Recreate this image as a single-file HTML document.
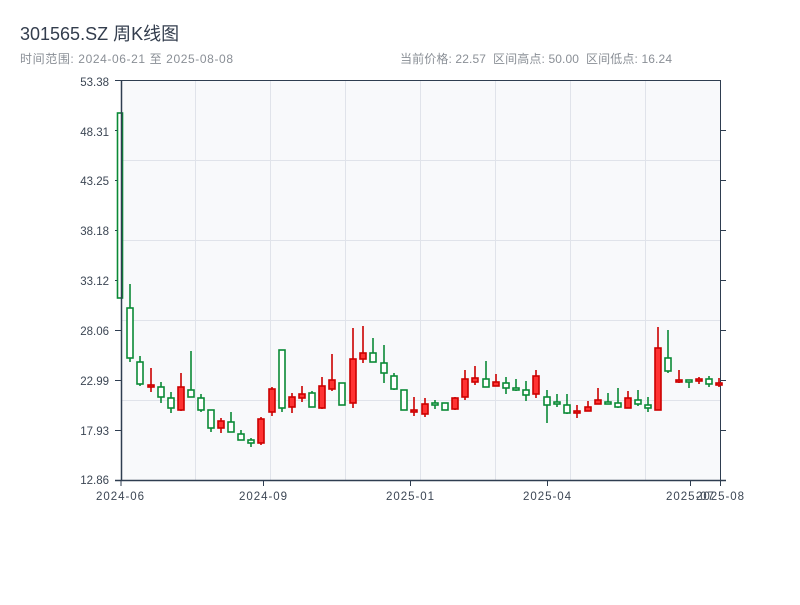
<!DOCTYPE html>
<html><head><meta charset="utf-8"><style>
body{margin:0;background:#fff;width:800px;height:600px;overflow:hidden;font-family:"Liberation Sans","Noto Sans CJK SC",sans-serif}
</style></head><body>
<svg width="800" height="600" xmlns="http://www.w3.org/2000/svg" font-family="Liberation Sans, Noto Sans CJK SC, sans-serif">
<text x="20" y="40" font-size="18" fill="#333d4d">301565.SZ 周K线图</text>
<text x="20" y="63" font-size="12" fill="#8a8f96" textLength="213" lengthAdjust="spacing">时间范围: 2024-06-21 至 2025-08-08</text>
<text x="400" y="63" font-size="12" fill="#8a8f96" textLength="272" lengthAdjust="spacing">当前价格: 22.57 &#160;区间高点: 50.00 &#160;区间低点: 16.24</text>
<rect x="121" y="80" width="599" height="400" fill="#f8f9fb"/>
<g stroke="#e0e3ea" stroke-width="1">
<line x1="195.5" y1="80" x2="195.5" y2="480"/><line x1="270.5" y1="80" x2="270.5" y2="480"/><line x1="345.5" y1="80" x2="345.5" y2="480"/><line x1="420.5" y1="80" x2="420.5" y2="480"/><line x1="495.5" y1="80" x2="495.5" y2="480"/><line x1="570.5" y1="80" x2="570.5" y2="480"/><line x1="645.5" y1="80" x2="645.5" y2="480"/>
<line x1="121" y1="160.5" x2="720" y2="160.5"/><line x1="121" y1="240.5" x2="720" y2="240.5"/><line x1="121" y1="320.5" x2="720" y2="320.5"/><line x1="121" y1="400.5" x2="720" y2="400.5"/>
</g>
<g stroke="#2e3d50" stroke-width="1">
<line x1="115" y1="80.5" x2="720" y2="80.5"/>
<line x1="115" y1="130.5" x2="121" y2="130.5"/><line x1="115" y1="180.5" x2="121" y2="180.5"/><line x1="115" y1="230.5" x2="121" y2="230.5"/><line x1="115" y1="280.5" x2="121" y2="280.5"/><line x1="115" y1="330.5" x2="121" y2="330.5"/><line x1="115" y1="380.5" x2="121" y2="380.5"/><line x1="115" y1="430.5" x2="121" y2="430.5"/>
<line x1="720.5" y1="80" x2="720.5" y2="481"/>
<line x1="720" y1="130.5" x2="726" y2="130.5"/><line x1="720" y1="180.5" x2="726" y2="180.5"/><line x1="720" y1="230.5" x2="726" y2="230.5"/><line x1="720" y1="280.5" x2="726" y2="280.5"/><line x1="720" y1="330.5" x2="726" y2="330.5"/><line x1="720" y1="380.5" x2="726" y2="380.5"/><line x1="720" y1="430.5" x2="726" y2="430.5"/>
<line x1="263.5" y1="480" x2="263.5" y2="486"/><line x1="410.5" y1="480" x2="410.5" y2="486"/><line x1="547.5" y1="480" x2="547.5" y2="486"/><line x1="690.5" y1="480" x2="690.5" y2="486"/><line x1="720.5" y1="480" x2="720.5" y2="486"/><line x1="121" y1="480" x2="121" y2="486"/>
</g>
<g font-size="11.5" fill="#3c4654" text-anchor="end">
<text x="109" y="86">53.38</text><text x="109" y="136">48.31</text><text x="109" y="185">43.25</text><text x="109" y="235">38.18</text><text x="109" y="285">33.12</text><text x="109" y="335">28.06</text><text x="109" y="385">22.99</text><text x="109" y="435">17.93</text><text x="109" y="484">12.86</text>
</g>
<g font-size="11.5" fill="#3c4654" text-anchor="middle">
<text x="120" y="500" textLength="48">2024-06</text><text x="263" y="500" textLength="48">2024-09</text><text x="410" y="500" textLength="48">2025-01</text><text x="547" y="500" textLength="48">2025-04</text><text x="690" y="500" textLength="48">2025-07</text><text x="720" y="500" textLength="48">2025-08</text>
</g>
<g stroke-width="1.6">
<g stroke="#0a8a36" fill="#fff">
<line x1="130" y1="284" x2="130" y2="362"/><rect x="127" y="308" width="6" height="50"/>
<line x1="140" y1="356" x2="140" y2="386"/><rect x="137" y="362" width="6" height="22"/>
<line x1="161" y1="382" x2="161" y2="403"/><rect x="158" y="387" width="6" height="10"/>
<line x1="171" y1="392" x2="171" y2="413"/><rect x="168" y="398" width="6" height="10"/>
<line x1="191" y1="351" x2="191" y2="397"/><rect x="188" y="390" width="6" height="7"/>
<line x1="201" y1="394" x2="201" y2="412"/><rect x="198" y="398" width="6" height="12"/>
<line x1="211" y1="410" x2="211" y2="432"/><rect x="208" y="410" width="6" height="18"/>
<line x1="231" y1="412" x2="231" y2="432"/><rect x="228" y="422" width="6" height="10"/>
<line x1="241" y1="430" x2="241" y2="440"/><rect x="238" y="434" width="6" height="6"/>
<line x1="251" y1="438" x2="251" y2="447"/><rect x="248" y="440" width="6" height="3"/>
<line x1="282" y1="350" x2="282" y2="412"/><rect x="279" y="350" width="6" height="58"/>
<line x1="312" y1="391" x2="312" y2="407"/><rect x="309" y="393" width="6" height="14"/>
<line x1="342" y1="383" x2="342" y2="405"/><rect x="339" y="383" width="6" height="22"/>
<line x1="373" y1="338" x2="373" y2="362"/><rect x="370" y="353" width="6" height="9"/>
<line x1="384" y1="345" x2="384" y2="383"/><rect x="381" y="363" width="6" height="10"/>
<line x1="394" y1="373" x2="394" y2="390"/><rect x="391" y="376" width="6" height="13"/>
<line x1="404" y1="390" x2="404" y2="410"/><rect x="401" y="390" width="6" height="20"/>
<line x1="435" y1="400" x2="435" y2="409"/><rect x="432" y="403" width="6" height="2"/>
<line x1="445" y1="403" x2="445" y2="410"/><rect x="442" y="403" width="6" height="7"/>
<line x1="486" y1="361" x2="486" y2="387"/><rect x="483" y="379" width="6" height="8"/>
<line x1="506" y1="377" x2="506" y2="394"/><rect x="503" y="383" width="6" height="5"/>
<line x1="516" y1="379" x2="516" y2="391"/><rect x="513" y="388" width="6" height="2"/>
<line x1="526" y1="381" x2="526" y2="401"/><rect x="523" y="390" width="6" height="5"/>
<line x1="547" y1="390" x2="547" y2="423"/><rect x="544" y="397" width="6" height="8"/>
<line x1="557" y1="394" x2="557" y2="407"/><rect x="554" y="402" width="6" height="2"/>
<line x1="567" y1="394" x2="567" y2="414"/><rect x="564" y="405" width="6" height="8"/>
<line x1="608" y1="393" x2="608" y2="404"/><rect x="605" y="402" width="6" height="2"/>
<line x1="618" y1="388" x2="618" y2="408"/><rect x="615" y="403" width="6" height="4"/>
<line x1="638" y1="390" x2="638" y2="406"/><rect x="635" y="400" width="6" height="4"/>
<line x1="648" y1="397" x2="648" y2="412"/><rect x="645" y="405" width="6" height="3"/>
<line x1="668" y1="330" x2="668" y2="373"/><rect x="665" y="358" width="6" height="13"/>
<line x1="689" y1="380" x2="689" y2="388"/><rect x="686" y="380" width="6" height="2"/>
<line x1="709" y1="376" x2="709" y2="387"/><rect x="706" y="379" width="6" height="5"/>
<rect x="117.5" y="113" width="5" height="185"/>
</g>
<g stroke="#cc0000" fill="#ff3333">
<line x1="151" y1="368" x2="151" y2="392"/><rect x="148" y="385" width="6" height="2"/>
<line x1="181" y1="373" x2="181" y2="411"/><rect x="178" y="387" width="6" height="23"/>
<line x1="221" y1="418" x2="221" y2="433"/><rect x="218" y="421" width="6" height="7"/>
<line x1="261" y1="417" x2="261" y2="445"/><rect x="258" y="419" width="6" height="24"/>
<line x1="272" y1="387" x2="272" y2="416"/><rect x="269" y="389" width="6" height="23"/>
<line x1="292" y1="393" x2="292" y2="413"/><rect x="289" y="397" width="6" height="10"/>
<line x1="302" y1="386" x2="302" y2="402"/><rect x="299" y="394" width="6" height="4"/>
<line x1="322" y1="377" x2="322" y2="409"/><rect x="319" y="386" width="6" height="22"/>
<line x1="332" y1="354" x2="332" y2="391"/><rect x="329" y="380" width="6" height="9"/>
<line x1="353" y1="328" x2="353" y2="408"/><rect x="350" y="359" width="6" height="44"/>
<line x1="363" y1="326" x2="363" y2="363"/><rect x="360" y="353" width="6" height="6"/>
<line x1="414" y1="397" x2="414" y2="416"/><rect x="411" y="410" width="6" height="2"/>
<line x1="425" y1="398" x2="425" y2="417"/><rect x="422" y="404" width="6" height="10"/>
<line x1="455" y1="397" x2="455" y2="410"/><rect x="452" y="398" width="6" height="11"/>
<line x1="465" y1="370" x2="465" y2="400"/><rect x="462" y="379" width="6" height="18"/>
<line x1="475" y1="366" x2="475" y2="385"/><rect x="472" y="378" width="6" height="4"/>
<line x1="496" y1="374" x2="496" y2="386"/><rect x="493" y="382" width="6" height="4"/>
<line x1="536" y1="370" x2="536" y2="398"/><rect x="533" y="376" width="6" height="18"/>
<line x1="577" y1="405" x2="577" y2="418"/><rect x="574" y="411" width="6" height="2"/>
<line x1="588" y1="401" x2="588" y2="411"/><rect x="585" y="407" width="6" height="4"/>
<line x1="598" y1="388" x2="598" y2="404"/><rect x="595" y="400" width="6" height="4"/>
<line x1="628" y1="391" x2="628" y2="408"/><rect x="625" y="398" width="6" height="10"/>
<line x1="658" y1="327" x2="658" y2="410"/><rect x="655" y="348" width="6" height="62"/>
<line x1="679" y1="370" x2="679" y2="383"/><rect x="676" y="380" width="6" height="2"/>
<line x1="699" y1="377" x2="699" y2="384"/><rect x="696" y="379" width="6" height="2"/>
<line x1="719" y1="378" x2="719" y2="387"/><rect x="716" y="383" width="6" height="2"/>
</g>
</g>
<line x1="121.5" y1="80" x2="121.5" y2="481" stroke="#2e3d50" stroke-width="1.5"/>
<line x1="115" y1="480.5" x2="726" y2="480.5" stroke="#2e3d50" stroke-width="1.5"/>
</svg>
</body></html>
